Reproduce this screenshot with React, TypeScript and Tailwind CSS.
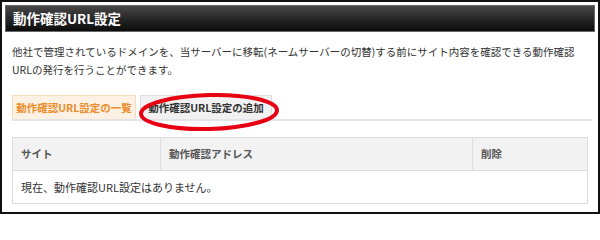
import React from "react";

export default function App() {
  const jp = { fontFamily: '"Noto Sans CJK JP", "Noto Sans", sans-serif' };
  return (
    <div
      className="relative w-[600px] h-[214px] border-2 border-[#111] bg-white px-[3px] pt-[3px] overflow-hidden"
      style={jp}
    >
      <div className="h-[27px] flex items-center pl-[7px] border border-[#666] bg-gradient-to-b from-[#474747] to-[#0c0c0c]">
        <span className="text-white font-bold text-[13.5px] leading-none">動作確認URL設定</span>
      </div>

      <div className="pl-[7px] pr-[3px]">
        <p className="mt-[11px] text-[10.5px] leading-[18px] text-[#333] whitespace-nowrap">
          他社で管理されているドメインを、当サーバーに移転(ネームサーバーの切替)する前にサイト内容を確認できる動作確認
          <br />
          URLの発行を行うことができます。
        </p>

        <div className="mt-[16px] flex gap-[4px] border-b-2 border-[#e4e4e4] h-[26px]">
          <div className="w-[124px] h-[24px] flex items-center justify-center bg-[#fdf1e4] border border-b-0 border-[#f3dcc0] text-[#ec8c2a] font-bold text-[10.5px]">
            動作確認URL設定の一覧
          </div>
          <div className="w-[132px] h-[24px] flex items-center justify-center bg-[#f1f1f1] border border-b-0 border-[#dcdcdc] text-[#333] font-bold text-[10.5px]">
            動作確認URL設定の追加
          </div>
        </div>

        <div className="mt-[16px] w-[576px] border border-[#dcdcdc] text-[10.5px]">
          <div className="flex h-[33px] bg-[#f2f2f2] border-b border-[#dcdcdc] text-[#555] font-bold">
            <div className="w-[148px] flex items-center pl-[8px] border-r border-[#dcdcdc]">サイト</div>
            <div className="w-[312px] flex items-center pl-[8px] border-r border-[#dcdcdc]">動作確認アドレス</div>
            <div className="flex-1 flex items-center pl-[8px]">削除</div>
          </div>
          <div className="h-[32px] flex items-center pl-[8px] text-[11px] text-[#333]">
            現在、動作確認URL設定はありません。
          </div>
        </div>
      </div>

      <svg
        className="absolute left-[133px] top-[88px] pointer-events-none"
        width="150"
        height="44"
        viewBox="0 0 150 44"
      >
        <ellipse cx="74" cy="22" rx="68" ry="17" fill="none" stroke="#e60012" strokeWidth="4" transform="rotate(-1.5 74 22)" />
      </svg>
    </div>
  );
}
